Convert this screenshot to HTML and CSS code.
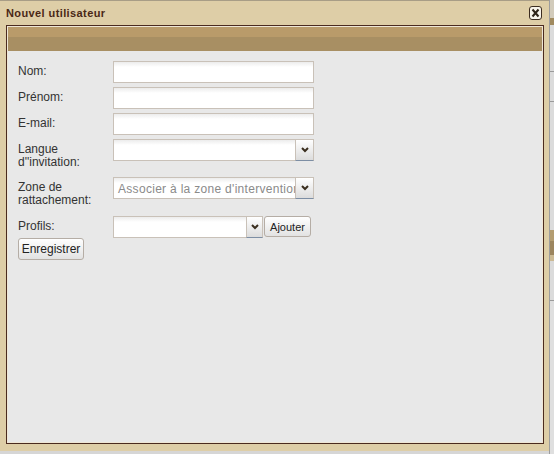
FILE: index.html
```html
<!DOCTYPE html>
<html lang="fr">
<head>
<meta charset="utf-8">
<title>Nouvel utilisateur</title>
<link rel="stylesheet" href="styles.css">
</head>
<body>
<div class="screen">
  <div class="dialog">
    <div class="titlebar">
      <span class="title">Nouvel utilisateur</span>
      <span class="close" role="button" aria-label="Fermer">
        <svg width="11" height="12" viewBox="0 0 11 12"><path d="M2.5 2.5 L8.5 9.5 M8.5 2.5 L2.5 9.5" stroke="#2e2418" stroke-width="2" fill="none"/></svg>
      </span>
    </div>
    <div class="panel">
      <div class="band"><div class="band-top"></div><div class="band-bottom"></div></div>
      <form class="form">
        <div class="row"><label class="label">Nom:</label><input class="field" type="text"></div>
        <div class="row"><label class="label">Prénom:</label><input class="field" type="text"></div>
        <div class="row"><label class="label">E-mail:</label><input class="field" type="text"></div>
        <div class="row"><label class="label">Langue<br>d''invitation:</label>
          <div class="select"><span class="select-text"></span><span class="select-arrow"><svg width="8" height="6" viewBox="0 0 8 6"><polyline points="1,1 4,4 7,1" stroke="#3a2e1e" stroke-width="2" fill="none"/></svg></span></div>
        </div>
        <div class="row row-zone"><label class="label">Zone de<br>rattachement:</label>
          <div class="select"><span class="select-text placeholder">Associer à la zone d'intervention</span><span class="select-arrow"><svg width="8" height="6" viewBox="0 0 8 6"><polyline points="1,1 4,4 7,1" stroke="#3a2e1e" stroke-width="2" fill="none"/></svg></span></div>
        </div>
        <div class="row row-last"><label class="label">Profils:</label>
          <div class="select select-small"><span class="select-text"></span><span class="select-arrow arrow-small"><svg width="8" height="6" viewBox="0 0 8 6"><polyline points="1,1 4,4 7,1" stroke="#3a2e1e" stroke-width="2" fill="none"/></svg></span></div>
          <span class="btn btn-add">Ajouter</span>
        </div>
        <span class="btn btn-save">Enregistrer</span>
      </form>
    </div>
  </div>
  <div class="backdrop">
    <div class="bd-top"></div>
    <div class="bd-brown"></div>
    <div class="bd-light h46"></div>
    <div class="bd-line"></div>
    <div class="bd-light h29"></div>
    <div class="bd-line"></div>
    <div class="bd-light h128"></div>
    <div class="bd-brown1"></div>
    <div class="bd-brown2"></div>
    <div class="bd-beige"></div>
    <div class="bd-light h39"></div>
    <div class="bd-line"></div>
    <div class="bd-rest"></div>
  </div>
</div>
</body>
</html>
```
FILE: styles.css
```css
* { box-sizing: border-box; }
html, body { margin: 0; padding: 0; }
body {
  background: #d6d6d6;
  font-family: "Liberation Sans", Arial, sans-serif;
  width: 554px;
  height: 454px;
  overflow: hidden;
}
.screen {
  display: flex;
  width: 554px;
  height: 451px;
}
.dialog {
  width: 549px;
  height: 451px;
  background: #decea7;
  border-top: 1px solid #a89d86;
  display: flex;
  flex-direction: column;
}
.titlebar {
  height: 24px;
  display: flex;
  justify-content: space-between;
  align-items: flex-start;
  padding: 6px 7px 0 6px;
}
.title {
  font-size: 11px;
  font-weight: bold;
  line-height: 13px;
  letter-spacing: 0.4px;
  color: #4a2816;
}
.close {
  width: 13px;
  height: 14px;
  margin-top: -1px;
  border: 1px solid #3b2c20;
  border-radius: 3px;
  background: #f8f4eb;
  display: flex;
  align-items: center;
  justify-content: center;
}
.close svg { display: block; }
.panel {
  margin: 0 5px 0 6px;
  height: 419px;
  border: 1px solid #4b2b20;
  padding: 1px;
  background: #e8e8e8;
  box-shadow: inset 0 0 0 1px #efe7d6;
}
.band-top { height: 10px; background: #b99b6a; }
.band-bottom { height: 14px; background: #a88f63; }
.form {
  padding: 10px 0 0 10px;
  margin: 0;
}
.row {
  display: flex;
  align-items: flex-start;
  margin-bottom: 4px;
}
.row-zone { margin-bottom: 5px; }
.row-last { margin-bottom: 0; }
.label {
  width: 95px;
  flex: none;
  padding: 4px 0;
  font-size: 12px;
  line-height: 13px;
  color: #333333;
}
.field {
  width: 201px;
  height: 22px;
  margin: 0;
  border: 1px solid #c9c1b8;
  padding: 0 4px;
  background: linear-gradient(#ececec, #ffffff 5px);
  font: 12px "Liberation Sans", Arial, sans-serif;
  outline: none;
}
.select {
  width: 201px;
  height: 22px;
  display: flex;
}
.select-small { width: 150px; }
.select-text {
  flex: 1;
  min-width: 0;
  border: 1px solid #c9c1b8;
  border-right: none;
  background: linear-gradient(#ececec, #ffffff 5px);
  padding: 3px 0 0 4px;
  font-size: 12px;
  line-height: 16px;
  letter-spacing: 0.3px;
  white-space: nowrap;
  overflow: hidden;
}
.placeholder { color: #8a8a8a; }
.select-arrow {
  width: 19px;
  flex: none;
  border: 1px solid #c9c1b8;
  border-bottom-color: #7d8ea4;
  background: linear-gradient(#ffffff, #dcdcdc);
  display: flex;
  align-items: center;
  justify-content: center;
}
.arrow-small { width: 17px; }
.select-arrow svg { display: block; }
.btn {
  display: flex;
  align-items: center;
  justify-content: center;
  border: 1px solid #b5ada5;
  border-radius: 3px;
  background: linear-gradient(#ffffff, #e2e2e2);
  color: #222222;
}
.btn-add {
  width: 47px;
  height: 21px;
  margin-left: 1px;
  font-size: 11px;
}
.btn-save {
  width: 66px;
  height: 22px;
  font-size: 12px;
}
.backdrop {
  width: 5px;
  height: 454px;
  border-left: 1px solid #9d9d9d;
  display: flex;
  flex-direction: column;
}
.bd-top { height: 18px; background: #d2cbbb; }
.bd-brown { height: 7px; background: #a08a5f; }
.bd-light { background: #dbdbdb; }
.h46 { height: 46px; }
.h29 { height: 29px; }
.h128 { height: 128px; }
.h39 { height: 39px; }
.bd-line { height: 1px; background: #9a9a9a; }
.bd-brown1 { height: 11px; background: #b39c70; }
.bd-brown2 { height: 14px; background: #9c855e; }
.bd-beige { height: 6px; background: #ccba94; }
.bd-rest { flex: 1; background: #dfdfdf; }
```
